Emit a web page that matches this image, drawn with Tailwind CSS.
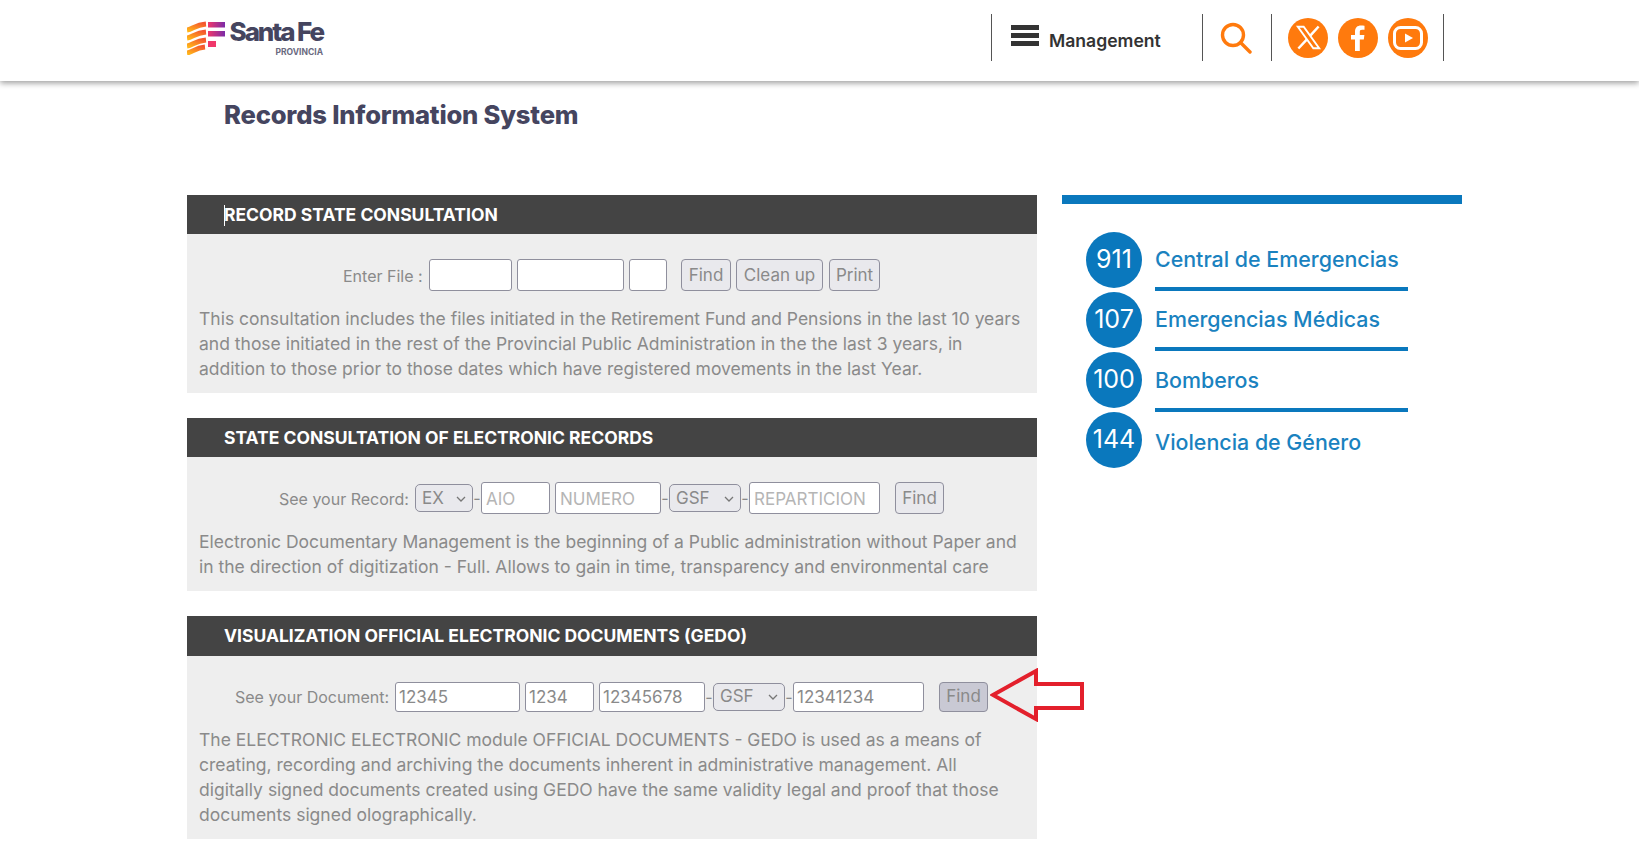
<!DOCTYPE html>
<html lang="en">
<head>
<meta charset="utf-8">
<title>Records Information System</title>
<script src="https://cdn.jsdelivr.net/npm/@tailwindcss/browser@4"></script>
</head>
<body class="bg-white font-['Inter',sans-serif] overflow-hidden h-[847px]">
<header class="h-[81px] bg-white shadow-[0_2px_6px_rgba(0,0,0,0.4)] flex items-start pl-[187px] relative">
  <a class="flex items-start gap-[5px] pt-[20px] w-[804px]">
    <svg width="38" height="34" viewBox="0 0 38 34" class="mt-px">
      <defs>
        <linearGradient id="o" x1="0" y1="1" x2="1" y2="0"><stop offset="0" stop-color="#ffb31a"/><stop offset="1" stop-color="#f4552f"/></linearGradient>
        <linearGradient id="p" x1="0" y1="0" x2="1" y2="0"><stop offset="0" stop-color="#f0386b"/><stop offset="1" stop-color="#7a2ba8"/></linearGradient>
      </defs>
      <g fill="none" stroke="url(#o)" stroke-width="5">
        <path d="M0 9c6-1 8-5 19-6"/>
        <path d="M0 17c6-1 8-5 19-6"/>
        <path d="M0 25c6-1 8-5 19-6"/>
        <path d="M0 32c6-1 8-5 18-6"/>
      </g>
      <rect x="21" y="1" width="17" height="5.500" fill="url(#p)"/>
      <rect x="21" y="10" width="17" height="5.500" fill="url(#p)"/>
      <rect x="21" y="20" width="8" height="6" fill="#f0386b"/>
    </svg>
    <div class="flex flex-col items-end w-[93px] text-[#45455f]">
      <span class="text-[26px] leading-[24px] font-extrabold tracking-[-2.100px] whitespace-nowrap">Santa Fe</span>
      <span class="text-[8.500px] leading-[10px] mt-[3px] font-bold text-[#6a6a80]">PROVINCIA</span>
    </div>
  </a>
  <nav class="flex items-start h-[47px] mt-[14px] text-[#333]">
    <div class="w-[211px] h-full border-l border-[#555] flex items-center pl-[19px]">
      <span class="w-[28px] flex flex-col gap-[3px] mb-[4px]">
        <i class="block h-[5px] bg-[#333]"></i><i class="block h-[5px] bg-[#333]"></i><i class="block h-[5px] bg-[#333]"></i>
      </span>
      <span class="ml-[10px] text-[17.600px] font-semibold mt-[7px]">Management</span>
    </div>
    <div class="w-[69px] h-full border-l border-[#555] flex items-center pl-[17px]">
      <svg width="32" height="32" viewBox="0 0 32 32" fill="none" stroke="#ff7a0d" stroke-width="3.400"><circle cx="13" cy="13" r="10.500"/><path d="M20.500 20.500 30 30" stroke-linecap="round"/></svg>
    </div>
    <div class="w-[173px] h-full border-x border-[#555] flex items-center pl-[16px] gap-[10px]">
      <span class="w-10 h-10 rounded-full bg-[#ff7a0d] flex items-center justify-center">
        <svg width="27" height="27" viewBox="0 0 24 24" fill="none" stroke="#fff"><path stroke-width="1.700" d="M2.500 2.500h5.200l13.800 19h-5.200z"/><path stroke-width="2.200" d="M21 2.200 13.400 10.600M10.600 13.700 3 21.800"/></svg>
      </span>
      <span class="w-10 h-10 rounded-full bg-[#ff7a0d] flex items-center justify-center">
        <svg width="14" height="26" viewBox="0 0 14 26"><path fill="#fff" d="M4 26V14.500H0V10h4V6.600C4 2.600 6.400.5 10 .5c1.700 0 3 .1 3.500.2v4.100h-2.400C9.200 4.800 8.800 5.700 8.800 7v3h4.600l-.6 4.500h-4V26z"/></svg>
      </span>
      <span class="w-10 h-10 rounded-full bg-[#ff7a0d] flex items-center justify-center">
        <svg width="30" height="24" viewBox="0 0 30 24"><rect x="1.500" y="1.500" width="27" height="21" rx="6" fill="none" stroke="#fff" stroke-width="3"/><path fill="#fff" d="M12 7.500 20 12l-8 4.500z"/></svg>
      </span>
    </div>
  </nav>
</header>

<h1 class="ml-[224px] mt-[19px] text-[25.600px] leading-[30px] font-extrabold tracking-[-0.200px] text-[#45455f]">Records Information System</h1>

<main class="mt-[65px] ml-[187px] flex items-start gap-[25px]">
  <div class="w-[850px] flex flex-col gap-[25px] text-[16px] text-[#8a8a8a]">

    <section class="bg-[#eeeeee]">
      <h2 class="h-[39px] pt-px bg-[#444444] text-white text-[17.500px] font-bold pl-[37px] flex items-center"><i class="w-px h-[21px] bg-white -mr-px"></i>RECORD STATE CONSULTATION</h2>
      <div class="flex items-center h-[32px] mt-[25px] pl-[156px]">
        <span class="w-[86px] pt-px whitespace-nowrap">Enter File :</span>
        <input class="w-[83px] h-[32px] bg-white border border-[#8f8f9d] rounded-[3px]">
        <input class="w-[107px] h-[32px] ml-[5px] bg-white border border-[#8f8f9d] rounded-[3px]">
        <input class="w-[38px] h-[32px] ml-[5px] bg-white border border-[#8f8f9d] rounded-[3px]">
        <button class="w-[50px] h-[32px] pt-px ml-[14px] bg-[#e9e9ed] border border-[#8f8f9d] rounded-[4px] text-[17px]">Find</button>
        <button class="w-[87px] h-[32px] pt-px ml-[5px] bg-[#e9e9ed] border border-[#8f8f9d] rounded-[4px] text-[17px]">Clean up</button>
        <button class="w-[51px] h-[32px] pt-px ml-[6px] bg-[#e9e9ed] border border-[#8f8f9d] rounded-[4px] text-[17px]">Print</button>
      </div>
      <p class="px-[12px] mt-[15px] leading-[25px] h-[87px] text-[17.500px]">This consultation includes the files initiated in the Retirement Fund and Pensions in the last 10 years and those initiated in the rest of the Provincial Public Administration in the the last 3 years, in addition to those prior to those dates which have registered movements in the last Year.</p>
    </section>

    <section class="bg-[#eeeeee]">
      <h2 class="h-[39px] pt-px bg-[#444444] text-white text-[17.500px] font-bold pl-[37px] flex items-center">STATE CONSULTATION OF ELECTRONIC RECORDS</h2>
      <div class="flex items-center h-[32px] mt-[25px] pl-[92px]">
        <span class="w-[136px] pt-px whitespace-nowrap">See your Record:</span>
        <div class="w-[58px] h-[28px] pt-px bg-[#e9e9ed] border border-[#8f8f9d] rounded-[5px] flex items-center justify-between pl-[6px] pr-[6px] text-[17px]">EX <svg width="10" height="6" viewBox="0 0 10 6" fill="none" stroke="#777" stroke-width="1.300"><path d="m1 1 4 4 4-4"/></svg></div>
        <span class="w-[8px] text-center">-</span>
        <input placeholder="AIO" class="w-[69px] h-[32px] pt-px px-[4px] bg-white border border-[#8f8f9d] rounded-[3px] placeholder:text-[#b5b5b5] text-[17px]">
        <input placeholder="NUMERO" class="w-[106px] h-[32px] pt-px ml-[5px] px-[4px] bg-white border border-[#8f8f9d] rounded-[3px] placeholder:text-[#b5b5b5] text-[17px]">
        <span class="w-[8px] text-center">-</span>
        <div class="w-[72px] h-[28px] pt-px bg-[#e9e9ed] border border-[#8f8f9d] rounded-[5px] flex items-center justify-between pl-[6px] pr-[6px] text-[17px]">GSF <svg width="10" height="6" viewBox="0 0 10 6" fill="none" stroke="#777" stroke-width="1.300"><path d="m1 1 4 4 4-4"/></svg></div>
        <span class="w-[8px] text-center">-</span>
        <input placeholder="REPARTICION" class="w-[131px] h-[32px] pt-px px-[4px] bg-white border border-[#8f8f9d] rounded-[3px] placeholder:text-[#b5b5b5] text-[17px]">
        <button class="w-[49px] h-[32px] pt-px ml-[15px] bg-[#e9e9ed] border border-[#8f8f9d] rounded-[4px] text-[17px]">Find</button>
      </div>
      <p class="px-[12px] mt-[15px] leading-[25px] h-[62px] text-[17.500px]">Electronic Documentary Management is the beginning of a Public administration without Paper and in the direction of digitization - Full. Allows to gain in time, transparency and environmental care</p>
    </section>

    <section class="bg-[#eeeeee] relative">
      <h2 class="h-[40px] bg-[#444444] text-white text-[17.500px] font-bold pl-[37px] flex items-center">VISUALIZATION OFFICIAL ELECTRONIC DOCUMENTS (GEDO)</h2>
      <div class="flex items-center h-[30px] mt-[26px] pl-[48px]">
        <span class="w-[160px] whitespace-nowrap">See your Document:</span>
        <input value="12345" class="w-[125px] h-[30px] px-[3px] bg-white border border-[#8f8f9d] rounded-[3px] text-[#8a8a8a] text-[17px]">
        <input value="1234" class="w-[69px] h-[30px] ml-[5px] px-[3px] bg-white border border-[#8f8f9d] rounded-[3px] text-[#8a8a8a] text-[17px]">
        <input value="12345678" class="w-[106px] h-[30px] ml-[5px] px-[3px] bg-white border border-[#8f8f9d] rounded-[3px] text-[#8a8a8a] text-[17px]">
        <span class="w-[8px] text-center">-</span>
        <div class="w-[72px] h-[28px] bg-[#e9e9ed] border border-[#8f8f9d] rounded-[5px] flex items-center justify-between pl-[6px] pr-[6px] text-[17px]">GSF <svg width="10" height="6" viewBox="0 0 10 6" fill="none" stroke="#777" stroke-width="1.300"><path d="m1 1 4 4 4-4"/></svg></div>
        <span class="w-[8px] text-center">-</span>
        <input value="12341234" class="w-[131px] h-[30px] px-[3px] bg-white border border-[#8f8f9d] rounded-[3px] text-[#8a8a8a] text-[17px]">
        <button class="w-[49px] h-[30px] ml-[15px] bg-[#c9c9d4] border border-[#8f8f9d] rounded-[4px] text-[17px]">Find</button>
      </div>
      <p class="px-[12px] mt-[15px] leading-[25px] h-[112px] text-[17.500px]">The ELECTRONIC ELECTRONIC module OFFICIAL DOCUMENTS - GEDO is used as a means of creating, recording and archiving the documents inherent in administrative management. All digitally signed documents created using GEDO have the same validity legal and proof that those documents signed olographically.</p>
      <svg class="absolute left-[803px] top-[52px]" width="96" height="54" viewBox="0 0 96 54" fill="none"><path d="M3 27 46 3v13h46v24H46v11z" stroke="#e3202c" stroke-width="4" stroke-linejoin="miter"/></svg>
    </section>
  </div>

  <aside class="w-[400px] text-[#1a82bf]">
    <div class="h-[9px] bg-[#0a78bd]"></div>
    <ul class="mt-[28px] pl-[24px]">
      <li class="flex h-[60px]">
        <span class="w-14 h-14 rounded-full bg-[#0a78bd] text-white text-[25px] flex items-center justify-center">911</span>
        <div class="ml-[13px] w-[253px] h-[59px] border-b-4 border-[#0a78bd] flex items-center text-[21.400px] font-medium whitespace-nowrap">Central de Emergencias</div>
      </li>
      <li class="flex h-[60px]">
        <span class="w-14 h-14 rounded-full bg-[#0a78bd] text-white text-[25px] flex items-center justify-center">107</span>
        <div class="ml-[13px] w-[253px] h-[59px] border-b-4 border-[#0a78bd] flex items-center text-[21.400px] font-medium whitespace-nowrap">Emergencias Médicas</div>
      </li>
      <li class="flex h-[60px]">
        <span class="w-14 h-14 rounded-full bg-[#0a78bd] text-white text-[25px] flex items-center justify-center">100</span>
        <div class="ml-[13px] w-[253px] h-[60px] border-b-4 border-[#0a78bd] flex items-center text-[21.400px] font-medium whitespace-nowrap">Bomberos</div>
      </li>
      <li class="flex h-[60px]">
        <span class="w-14 h-14 rounded-full bg-[#0a78bd] text-white text-[25px] flex items-center justify-center">144</span>
        <div class="ml-[13px] h-[60px] pt-px flex items-center text-[21.400px] font-medium whitespace-nowrap">Violencia de Género</div>
      </li>
    </ul>
  </aside>
</main>
</body>
</html>
